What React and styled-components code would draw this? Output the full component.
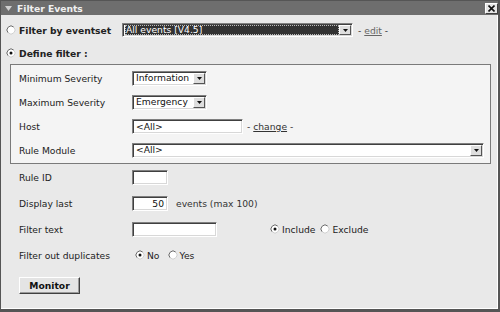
import styled, { createGlobalStyle } from 'styled-components';

const GlobalStyle = createGlobalStyle`
	html, body {
		margin: 0;
		padding: 0;
		background: #fff;
	}
	body {
		font-family: "DejaVu Sans", Verdana, sans-serif;
		font-size: 9.2px;
		color: #222;
	}
`

const Window = styled.div`
	width: 500px;
	height: 312px;
	box-sizing: border-box;
	border: 1px solid #555;
	border-right-width: 2px;
	border-bottom-width: 3px;
	background: #e9e9e9;
	display: flex;
	flex-direction: column;
`

const TitleBar = styled.div`
	height: 14px;
	flex: none;
	background: #6e6e6e;
	color: #f0f0f0;
	font-weight: bold;
	display: flex;
	align-items: center;
	padding-left: 4px;
	gap: 5px;
`

const CloseButton = styled.span`
	margin-left: auto;
	align-self: flex-end;
	width: 13px;
	height: 11px;
	box-sizing: border-box;
	background: #e6e6e6;
	border-top: 1px solid #fff;
	border-left: 1px solid #fff;
	border-bottom: 1px solid #404040;
	border-right: 1px solid #404040;
	display: flex;
	align-items: center;
	justify-content: center;
	margin-bottom: 1px;
`

const Body = styled.div`
	flex: 1;
	border-right: 1px solid #fff;
	border-bottom: 1px solid #fff;
	padding: 7px 0 0 5px;
	display: flex;
	flex-direction: column;
	align-items: flex-start;
`

const OptionRow = styled.div`
	height: 16px;
	display: flex;
	align-items: center;
	margin-top: ${p => p.$gap || 0}px;
`

const OptionLabel = styled.span`
	font-weight: bold;
	margin-left: 3px;
	width: ${p => p.$width || 'auto'};
`

const FilterBox = styled.div`
	margin: 3px 0 0 4px;
	width: 481px;
	box-sizing: border-box;
	border: 1px solid #7a7a7a;
	background: #f4f4f4;
	padding: 1px 0 1px 8px;
`

const FieldList = styled.div`
	padding-left: ${p => p.$pad || 0}px;
`

const FieldRow = styled.div`
	height: ${p => p.$h}px;
	display: grid;
	grid-template-columns: 113px 1fr;
	align-items: center;
`

const FieldLabel = styled.span`
	color: #222;
`

const Controls = styled.div`
	display: flex;
	align-items: center;
`

const TextInput = styled.input`
	width: ${p => p.$w}px;
	height: 15px;
	box-sizing: border-box;
	margin: 0;
	padding: 0 3px;
	font-family: "DejaVu Sans", Verdana, sans-serif;
	font-size: 9.2px;
	color: #111;
	text-align: ${p => p.$align || 'left'};
	background: #fff;
	border-top: 1px solid #808080;
	border-left: 1px solid #808080;
	border-bottom: 1px solid #fff;
	border-right: 1px solid #fff;
	box-shadow: inset 1px 1px 0 #404040, inset -1px -1px 0 #d8d8d8;
	outline: none;
`

const SelectBox = styled.span`
	width: ${p => p.$w}px;
	height: ${p => p.$h || 15}px;
	box-sizing: border-box;
	display: flex;
	align-items: center;
	padding: 1px 1px 1px 2px;
	background: #fff;
	border-top: 1px solid #808080;
	border-left: 1px solid #808080;
	border-bottom: 1px solid #fff;
	border-right: 1px solid #fff;
	box-shadow: inset 1px 1px 0 #404040, inset -1px -1px 0 #d8d8d8;
`

const SelectText = styled.span`
	flex: 1;
	align-self: stretch;
	display: flex;
	align-items: center;
	padding-left: 1px;
	line-height: 1;
	color: ${p => (p.$dark ? '#fff' : '#111')};
	background: ${p => (p.$dark ? '#333' : 'transparent')};
	outline: ${p => (p.$dark ? '1px dotted #bbb' : 'none')};
	outline-offset: -1px;
	white-space: nowrap;
	overflow: hidden;
`

const ArrowButton = styled.span`
	width: 12px;
	align-self: stretch;
	box-sizing: border-box;
	background: #dedede;
	border-top: 1px solid #fff;
	border-left: 1px solid #fff;
	border-bottom: 1px solid #555;
	border-right: 1px solid #555;
	display: flex;
	align-items: center;
	justify-content: center;
`

const Hint = styled.span`
	margin-left: ${p => p.$gap || 4}px;
	color: #333;
`

const LinkText = styled.span`
	color: ${p => p.$muted ? '#666' : '#333'};
	text-decoration: underline;
`

const Choice = styled.span`
	display: inline-flex;
	align-items: center;
	margin-left: ${p => p.$gap || 0}px;
	gap: 2px;
	color: #222;
`

const MonitorButton = styled.button`
	margin: 9px 0 0 13px;
	width: 61px;
	height: 17px;
	padding: 0;
	box-sizing: border-box;
	font-family: "DejaVu Sans", Verdana, sans-serif;
	font-size: 9.2px;
	font-weight: bold;
	color: #111;
	background: #e4e4e4;
	border-top: 1px solid #fff;
	border-left: 1px solid #fff;
	border-bottom: 1px solid #404040;
	border-right: 1px solid #404040;
	box-shadow: inset -1px -1px 0 #9a9a9a;
`

const RadioIcon = styled.svg`
	flex: none;
	display: block;
`

const Radio = ({ checked }) => (
	<RadioIcon viewBox="0 0 10 10" width="10" height="10">
		<circle cx="5" cy="5" r="4" fill="#fff" />
		<path d="M2.17 7.83 A4 4 0 0 1 7.83 2.17" stroke="#6a6a6a" strokeWidth="1" fill="none" />
		<path d="M7.83 2.17 A4 4 0 0 1 2.17 7.83" stroke="#d0d0d0" strokeWidth="1" fill="none" />
		{checked && <circle cx="5" cy="5" r="1.5" fill="#111" />}
	</RadioIcon>
)

const DownArrow = () => (
	<svg width="5" height="3" viewBox="0 0 5 3">
		<polygon points="0,0 5,0 2.5,3" fill="#111" />
	</svg>
)

const Select = ({ w, h, dark, children }) => (
	<SelectBox $w={w} $h={h}>
		<SelectText $dark={dark}>{children}</SelectText>
		<ArrowButton><DownArrow /></ArrowButton>
	</SelectBox>
)

export default function App() {
	return (
		<>
			<GlobalStyle />
			<Window>
				<TitleBar>
					<svg width="7" height="5" viewBox="0 0 7 5">
						<polygon points="0,0 7,0 3.5,5" fill="#cfcfcf" />
					</svg>
					<span>Filter Events</span>
					<CloseButton>
						<svg width="7" height="7" viewBox="0 0 7 7">
							<path d="M0.5 0.5 L6.5 6.5 M6.5 0.5 L0.5 6.5" stroke="#111" strokeWidth="1.6" />
						</svg>
					</CloseButton>
				</TitleBar>
				<Body>
					<OptionRow>
						<Radio />
						<OptionLabel $width="103px">Filter by eventset</OptionLabel>
						<Select w={231} h={14} dark>All events [V4.5]</Select>
						<Hint $gap={5}>- <LinkText $muted>edit</LinkText> -</Hint>
					</OptionRow>
					<OptionRow $gap={7}>
						<Radio checked />
						<OptionLabel>Define filter :</OptionLabel>
					</OptionRow>
					<FilterBox>
						<FieldRow $h={24}>
							<FieldLabel>Minimum Severity</FieldLabel>
							<Controls><Select w={75}>Information</Select></Controls>
						</FieldRow>
						<FieldRow $h={24}>
							<FieldLabel>Maximum Severity</FieldLabel>
							<Controls><Select w={75}>Emergency</Select></Controls>
						</FieldRow>
						<FieldRow $h={24}>
							<FieldLabel>Host</FieldLabel>
							<Controls>
								<TextInput $w={111} readOnly defaultValue="<All>" />
								<Hint>- <LinkText>change</LinkText> -</Hint>
							</Controls>
						</FieldRow>
						<FieldRow $h={24}>
							<FieldLabel>Rule Module</FieldLabel>
							<Controls><Select w={352}>&lt;All&gt;</Select></Controls>
						</FieldRow>
					</FilterBox>
					<FieldList $pad={13}>
						<FieldRow $h={26}>
							<FieldLabel>Rule ID</FieldLabel>
							<Controls><TextInput $w={36} readOnly defaultValue="" /></Controls>
						</FieldRow>
						<FieldRow $h={26}>
							<FieldLabel>Display last</FieldLabel>
							<Controls>
								<TextInput $w={36} $align="right" readOnly defaultValue="50" />
								<Hint $gap={8}>events (max 100)</Hint>
							</Controls>
						</FieldRow>
						<FieldRow $h={26}>
							<FieldLabel>Filter text</FieldLabel>
							<Controls>
								<TextInput $w={85} readOnly defaultValue="" />
								<Choice $gap={53}><Radio checked />Include</Choice>
								<Choice $gap={5}><Radio />Exclude</Choice>
							</Controls>
						</FieldRow>
						<FieldRow $h={26}>
							<FieldLabel>Filter out duplicates</FieldLabel>
							<Controls>
								<Choice $gap={3}><Radio checked />No</Choice>
								<Choice $gap={8}><Radio />Yes</Choice>
							</Controls>
						</FieldRow>
					</FieldList>
					<MonitorButton>Monitor</MonitorButton>
				</Body>
			</Window>
		</>
	)
}
